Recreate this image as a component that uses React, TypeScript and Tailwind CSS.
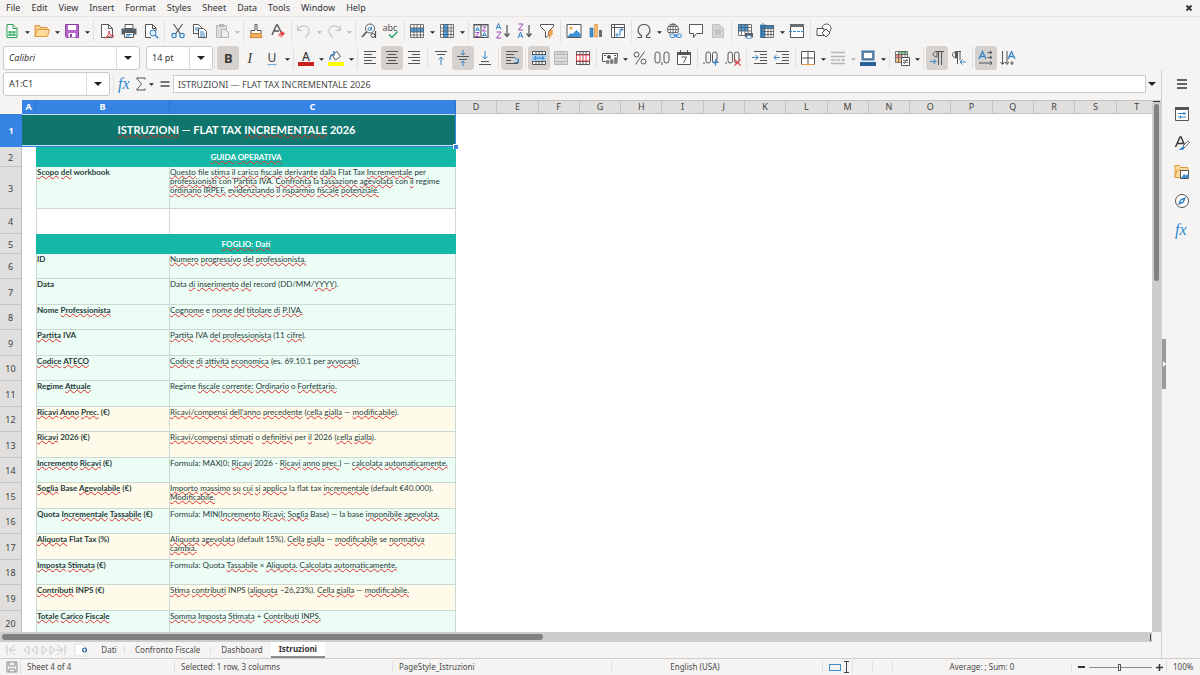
import type { ReactNode } from 'react'
import clsx from 'clsx'

const G = '#555555'
const B = '#3584c8'

// 16x16 drawings, keyed by command name
const icons: Record<string, ReactNode> = {
  new: (
    <>
      <path d="M3 1.5h6l4 4v9H3z" fill="#fff" stroke="#2f9e57" />
      <path d="M9 1.5v4h4" fill="#d6f0de" stroke="#2f9e57" />
      <path d="M4.5 8h7v5h-7z" fill="#43b36b" />
      <path d="M4.5 10.5h7M8 8v5" stroke="#d6f0de" strokeWidth=".7" />
    </>
  ),
  open: (
    <>
      <path d="M1 13.5v-11h4.5l1 2H13v2" fill="#f7d08a" stroke="#d9923b" />
      <path d="M1 13.5 3.5 6.5h12l-2 7z" fill="#fbdc9c" stroke="#e09a3e" />
    </>
  ),
  save: (
    <>
      <path d="M1.500 1.500h13v13h-12l-1-1z" fill="#b667c7" stroke="#8e3fa3" />
      <path d="M4 2h8v5H4z" fill="#fff" />
      <path d="M4.500 10h7v4.500h-7z" fill="#fff" />
      <path d="M6 11h2v3H6z" fill="#8e3fa3" />
    </>
  ),
  pdf: (
    <>
      <path d="M2.500 1.500h7l4 4v9h-11z" fill="#fff" stroke={G} />
      <path d="M9.500 1.500v4h4" fill="none" stroke={G} />
      <path d="M6 15c3-2 4-4 4-7 0 3 2 5 5 5-3-.5-6 .5-9 2" fill="none" stroke="#d8444c" />
    </>
  ),
  print: (
    <>
      <path d="M4 1.500h8v4H4z" fill="#fff" stroke={G} />
      <path d="M.5 5.500h15v6H.5z" fill="#58606a" />
      <path d="M3.500 9.500h9v5h-9z" fill="#fff" stroke={G} />
      <path d="M5 11.500h6M5 13h4" stroke={B} />
    </>
  ),
  preview: (
    <>
      <path d="M13 8V5L9.500 1.500h-7v13H8" fill="#fff" stroke={G} />
      <path d="M9.500 1.500v4H13" fill="none" stroke={G} />
      <circle cx="10" cy="10" r="3" fill="#d9ecf9" stroke={B} />
      <path d="m12.200 12.200 3 3" stroke={B} strokeWidth="1.500" />
    </>
  ),
  cut: (
    <>
      <path d="m3.500 1 7 10M12.500 1l-7 10" stroke={G} strokeWidth="1.200" />
      <circle cx="4" cy="12.500" r="2.200" fill="none" stroke={B} strokeWidth="1.200" />
      <circle cx="12" cy="12.500" r="2.200" fill="none" stroke={B} strokeWidth="1.200" />
    </>
  ),
  copy: (
    <>
      <path d="M1.500 1.500h5l3 3v6h-8z" fill="#fff" stroke={G} />
      <path d="M3 5h4M3 7h4" stroke={B} />
      <path d="M6.500 5.500h5l3 3v6h-8z" fill="#fff" stroke={G} />
      <path d="M8 9h4M8 11h5M8 13h5" stroke={B} />
    </>
  ),
  paste: (
    <>
      <path d="M2.500 2.500h10v12h-10z" fill="#dcdcdc" stroke="#b8b8b8" />
      <path d="M5 1h5v3H5z" fill="#b8b8b8" />
      <path d="M7.500 6.500h4l3 3v5h-7z" fill="#eee" stroke="#b0b0b0" />
    </>
  ),
  brush: (
    <>
      <path d="M7 1.500h2v6h4v3H3v-3h4z" fill="#fff" stroke={G} />
      <path d="M3 10.500h10l1 4H2z" fill="#f6b26b" stroke="#d9832b" />
    </>
  ),
  clear: (
    <>
      <path d="m2 12 4.500-10h1L11 9M4 8h5" fill="none" stroke={G} strokeWidth="1.400" />
      <path d="m8 12 4-4 3 2.500-4 4z" fill="#e0474c" />
      <path d="m8 12 1.500-1.500 3 2.500-1.500 1.500z" fill="#f3a0a3" />
    </>
  ),
  undo: <path d="M1.500 2.500v5h5M2 7c3-6 11-5 11 1 0 2-1 4-4 6.500" fill="none" stroke="#c4c4c4" strokeWidth="1.200" />,
  redo: <path d="M14.500 2.500v5h-5M14 7C11 1 3 2 3 8c0 2 1 4 4 6.500" fill="none" stroke="#c4c4c4" strokeWidth="1.200" />,
  find: (
    <>
      <circle cx="9" cy="5.500" r="4.500" fill="#fff" stroke={G} />
      <path d="M5.500 9 1 14" stroke={G} strokeWidth="1.600" />
      <circle cx="8.500" cy="6" r="1.500" fill="none" stroke={B} />
      <path d="M10.500 3.500v4" stroke={B} />
      <circle cx="12" cy="12.500" r="2" fill="none" stroke={G} />
      <path d="M14.500 8v7" stroke={G} strokeWidth="1.200" />
    </>
  ),
  spell: (
    <>
      <text x="-.5" y="7.500" fontSize="9" fill={G} fontFamily="Noto Sans">abc</text>
      <path d="m6 11.500 3 3 5.500-6" fill="none" stroke="#2fa866" strokeWidth="1.500" />
    </>
  ),
  row: (
    <>
      <path d="M1.500 1.500h13v13h-13z" fill="#fff" />
      <path d="M1 5h14v4H1z" fill="#4aa0e0" />
      <path d="M1.500 1.500h13v13h-13zM1.500 5h13M1.500 9h13M1.500 12h13M5 1.500V15M8 1.500V15M11.500 1.500V15" fill="none" stroke={G} strokeWidth=".8" />
    </>
  ),
  col: (
    <>
      <path d="M1.500 1.500h13v13h-13z" fill="#fff" />
      <path d="M4.500 1H9v14H4.500z" fill="#4aa0e0" />
      <path d="M1.500 1.500h13v13h-13zM1.500 5h13M1.500 8h13M1.500 11.500h13M4.500 1.500V15M9 1.500V15M12 1.500V15" fill="none" stroke={G} strokeWidth=".8" />
    </>
  ),
  sort: (
    <>
      <path d="M1 1.500h14v13H1zM1 2h14M8 2v12" fill="#fff" stroke={G} strokeWidth="1.200" />
      <path d="m2.500 8 2-4 2 4M3 7h3" fill="none" stroke={B} />
      <path d="M2.500 9.500h3.500l-3.500 4h4" fill="none" stroke="#a347ba" />
      <path d="M9.500 4H13L9.500 8h4" fill="none" stroke="#a347ba" />
      <path d="m9.500 13.500 2-4 2 4M10 12.500h3" fill="none" stroke={B} />
    </>
  ),
  asc: (
    <>
      <path d="m1 6.500 2.500-6 2.500 6M2 4.500h3" fill="none" stroke={B} />
      <path d="M1.500 9H6l-4.500 6H6" fill="none" stroke="#a347ba" />
      <path d="M12 2v11M9.500 10.500 12 13.500l2.500-3" fill="none" stroke={G} strokeWidth="1.200" />
    </>
  ),
  desc: (
    <>
      <path d="M1.500 1H6L1.500 7H6" fill="none" stroke="#a347ba" />
      <path d="m1 15 2.500-6L6 15M2 13h3" fill="none" stroke={B} />
      <path d="M12 2v11M9.500 10.500 12 13.500l2.500-3" fill="none" stroke={G} strokeWidth="1.200" />
    </>
  ),
  filter: (
    <>
      <path d="M1.500 1.500h13v2l-5 5v4l-3 2v-6l-5-5z" fill="#fff" stroke={G} />
      <path d="m11 7-2 4h2l-1 4.500 4-5.500h-2l2-3z" fill="#f3a64d" stroke="#d9832b" strokeWidth=".5" />
    </>
  ),
  image: (
    <>
      <path d="M1 1.500h14v13H1z" fill="#fff" stroke={G} />
      <circle cx="5" cy="5" r="1.600" fill="#f3a64d" />
      <path d="m1.500 14 3-4 2 1 4-4 4 4v3z" fill="#3d92d6" />
    </>
  ),
  chart: (
    <>
      <path d="M2 5h3v9H2z" fill="#3d92d6" stroke="#2468a0" strokeWidth=".6" />
      <path d="M6.500 1.500h3V14h-3z" fill="#f8bd72" stroke="#d9832b" strokeWidth=".6" />
      <path d="M11 7h3v7h-3z" fill="#6b6b6b" />
    </>
  ),
  pivot: (
    <>
      <path d="M1.500 1.500h13v13h-13zM1.500 4.500h13M4.500 1.500v13" fill="#fff" stroke={G} />
      <path d="M6 10.500c0 2 2 2 4 1.500V6.500h3M8 10l-2 2.500 2 2M11 4.500l2 2-2 2" fill="none" stroke={B} />
    </>
  ),
  omega: <path d="M1.500 14.500h4v-2C0 9.500 1.500 1.500 8 1.500s8 8 2.500 11v2h4" fill="none" stroke={G} strokeWidth="1.200" />,
  link: (
    <>
      <circle cx="7" cy="6.500" r="5.500" fill="#fff" stroke={G} />
      <path d="M1.500 6.500h11M2.500 3.500h9M2.500 9.500h9M7 1v11" stroke={G} strokeWidth=".8" />
      <ellipse cx="7" cy="6.500" rx="2.700" ry="5.500" fill="none" stroke={G} strokeWidth=".8" />
      <path d="M4 10h12v5H4z" fill="#f5f4f3" />
      <rect x="4" y="11" width="5.500" height="3.500" rx="1.700" fill="none" stroke={B} />
      <rect x="10" y="11" width="5.500" height="3.500" rx="1.700" fill="none" stroke={B} />
      <path d="M7.500 12.800h5" stroke={B} />
    </>
  ),
  comment: <path d="M1.500 1.500h13v9h-6l-3 4v-4h-4z" fill="#fff" stroke={G} />,
  header: (
    <>
      <path d="M2.500 1.500h7l4 4v9h-11z" fill="#d5d5d5" stroke="#c0c0c0" />
      <path d="M5 7h6M5 9h6M5 11h6" stroke="#b5b5b5" />
    </>
  ),
  parea: (
    <>
      <path d="M1.500 1.500h13v12h-13z" fill="#fff" />
      <path d="M1 1h10v7H1z" fill="#4aa0e0" />
      <path d="M1.500 1.500h13v11h-13zM1.500 4.500h13M1.500 8h13M4.500 1.500v11M8 1.500v11M11 1.500v11" fill="none" stroke={G} strokeWidth=".8" />
      <path d="M8 10h8v4.500H8z" fill="#55606c" />
      <path d="M10 12.500h4v3h-4z" fill="#fff" stroke={B} strokeWidth=".7" />
    </>
  ),
  freeze: (
    <>
      <path d="M2.500 2.500h12v12h-12z" fill="#fff" />
      <path d="M1 2h14v3.500H6V15H1z" fill="#3d92d6" />
      <path d="M2.500 2.500h12v12h-12zM2.500 5.500h12M2.500 8.500h12M2.500 11.500h12M6 2.500v12M9 2.500v12M12 2.500v12" fill="none" stroke={G} strokeWidth=".8" />
      <path d="M4 0v5M1.500 1.500l5 2.500M6.500 1.500l-5 2.500" stroke="#2468a0" strokeWidth=".8" />
    </>
  ),
  split: (
    <>
      <path d="M1.500 1.500h13v13h-13z" fill="#fff" stroke={G} />
      <path d="M1 1h14v3H1z" fill="#6b6b6b" />
      <path d="M0 8.500h16" stroke={B} strokeDasharray="3 1" />
    </>
  ),
  shapes: (
    <>
      <circle cx="10.500" cy="5.500" r="4.500" fill="#fff" stroke={G} />
      <path d="M1 5.500h7v7H1z" fill="#fff" stroke={G} />
      <path d="m10 6 4 4-4 4-4-4z" fill="#fff" stroke={G} />
    </>
  ),
  bold: <text x="4" y="13" fontSize="13" fontWeight="700" fill="#3a3a3a" fontFamily="Noto Sans">B</text>,
  italic: <text x="5.500" y="13" fontSize="14" fontStyle="italic" fill="#3a3a3a" fontFamily="Liberation Serif">I</text>,
  underline: (
    <>
      <text x="3.500" y="12" fontSize="12" fill="#3a3a3a" fontFamily="Noto Sans">U</text>
      <path d="M3.500 14.500h9" stroke="#6da7dc" />
    </>
  ),
  fontcolor: (
    <>
      <text x="4" y="10.500" fontSize="12" fontWeight="500" fill="#3a3a3a" fontFamily="Noto Sans">A</text>
      <path d="M0 12h16v4H0z" fill="#c9211e" />
    </>
  ),
  highlight: (
    <>
      <path d="m4 5 5-3.500 3.500 5-5 3.500z" fill="#fff" stroke={G} />
      <path d="M4 5c-2 0-2 3-2 5M6 1v5" fill="none" stroke={B} strokeWidth="1.400" />
      <path d="M0 12h16v4H0z" fill="#ffff00" />
    </>
  ),
  left: <path d="M2 1.500h12M2 4.500h8M2 7.500h12M2 10.500h8M2 13.500h12" stroke={G} />,
  center: <path d="M2 1.500h12M4 4.500h8M2 7.500h12M4 10.500h8M2 13.500h12" stroke={G} />,
  right: <path d="M2 1.500h12M6 4.500h8M2 7.500h12M6 10.500h8M2 13.500h12" stroke={G} />,
  top: (
    <>
      <path d="M2 1.500h12M4 4.500h8" stroke={G} />
      <path d="M8 15V7M5.500 9.500 8 7l2.500 2.500" fill="none" stroke={B} />
    </>
  ),
  middle: (
    <>
      <path d="M2 6.500h12M4 9.500h8" stroke={G} />
      <path d="M8 0v5M6 3l2 2 2-2M8 16v-5M6 13l2-2 2 2" fill="none" stroke={B} />
    </>
  ),
  bottom: (
    <>
      <path d="M2 14.500h12M4 11.500h8" stroke={G} />
      <path d="M8 1v8M5.500 6.500 8 9l2.500-2.500" fill="none" stroke={B} />
    </>
  ),
  wrap: (
    <>
      <path d="M2 1.500h12M2 4.500h8M2 7.500h7M2 10.500h5M2 13.500h12" stroke={G} />
      <path d="M9 7.500c3 0 4 1 5 4M14.500 8.500v4h-4" fill="none" stroke={B} />
    </>
  ),
  merge: (
    <>
      <path d="M1.500 1.500h13v13h-13zM1.500 4.500h13M1.500 11.500h13M5 1.500v3M8 1.500v3M11 1.500v3M5 11.500v3M8 11.500v3M11 11.500v3" fill="#fff" stroke={G} />
      <path d="M1 5h14v6H1z" fill="#9fcdf1" />
      <path d="M3 8h10M5 6 3 8l2 2M11 6l2 2-2 2" fill="none" stroke={B} />
    </>
  ),
  merge2: <path d="M1.500 1.500h13v13h-13zM1.500 4.500h13M1.500 11.500h13M5 1.500v3M8 1.500v3M11 1.500v3M5 11.500v3M8 11.500v3M11 11.500v3M1.500 8h13" fill="#dedede" stroke="#b5b5b5" />,
  unmerge: (
    <>
      <path d="M1.500 1.500h13v13h-13zM1.500 4.500h13M1.500 11.500h13M5 1.500v13M8 1.500v13M11 1.500v13" fill="#fff" stroke={G} />
      <path d="M1.500 5h13v6h-13zM5 5v6M8 5v6M11 5v6" fill="#fff" stroke="#d8444c" />
    </>
  ),
  currency: (
    <>
      <path d="M.5 3.500h15v8H.5z" fill="#fff" stroke={G} />
      <circle cx="7" cy="7" r="2" fill={G} />
      <path d="M2 5.500h2M12 5.500h2" stroke={G} />
      <path d="M4 10h3.500v4H4zM8 9h3.500v5H8zM12 7h3.500v7H12z" fill="#7a7a7a" stroke="#f5f4f3" strokeWidth=".4" />
    </>
  ),
  percent: (
    <>
      <circle cx="4.500" cy="4.500" r="2.500" fill="none" stroke={G} />
      <circle cx="11.500" cy="11.500" r="2.500" fill="none" stroke={G} />
      <path d="M12.500 1.500 3.500 14.500" stroke={G} />
    </>
  ),
  number: (
    <>
      <rect x="1" y="2" width="5" height="11" rx="2.500" fill="none" stroke={G} />
      <rect x="10" y="2" width="5" height="11" rx="2.500" fill="none" stroke={G} />
      <path d="M8 12v3" stroke={G} />
    </>
  ),
  date: (
    <>
      <path d="M1.500 2.500h13v12h-13z" fill="#fff" stroke={G} />
      <path d="M1 2h14v3H1zM4 0h1v2H4zM11 0h1v2h-1z" fill={G} />
      <path d="M5.500 7h5L7.500 13" fill="none" stroke={G} />
    </>
  ),
  adddec: (
    <>
      <path d="M1 12v2" stroke={G} />
      <rect x="3" y="2" width="4.500" height="11" rx="2.200" fill="none" stroke={G} />
      <rect x="9.500" y="2" width="4.500" height="11" rx="2.200" fill="none" stroke={G} />
      <path d="M12.500 9v6.500M9.300 12.300h6.500" stroke={B} strokeWidth="1.200" />
    </>
  ),
  deldec: (
    <>
      <path d="M1 12v2" stroke={G} />
      <rect x="3" y="2" width="4.500" height="11" rx="2.200" fill="none" stroke={G} />
      <rect x="9.500" y="2" width="4.500" height="11" rx="2.200" fill="none" stroke={G} />
      <path d="m9.500 9.500 6 6M15.500 9.500l-6 6" stroke="#e0474c" strokeWidth="1.200" />
    </>
  ),
  indent: (
    <>
      <path d="M2 1.500h13M8 4.500h7M8 7.500h7M8 10.500h7M2 13.500h13" stroke={G} />
      <path d="M0 7.500h6M3.500 5 6 7.500 3.500 10" fill="none" stroke={B} />
    </>
  ),
  outdent: (
    <>
      <path d="M2 1.500h13M8 4.500h7M8 7.500h7M8 10.500h7M2 13.500h13" stroke={G} />
      <path d="M0 7.500h6M2.500 5 0 7.500 2.500 10" fill="none" stroke={B} />
    </>
  ),
  borders: (
    <>
      <path d="M1.500 1.500h13v13h-13zM8 1.500v13M1.500 8h13" fill="#fff" stroke={G} />
      <path d="M1.500 14.500h13" stroke="#e39a4a" />
    </>
  ),
  linestyle: <path d="M1 2.500h14M1 6.500h14M1 10h4M6 10h4M11 10h4M1 13.500h14" stroke="#b5b5b5" strokeWidth="1.500" />,
  bordercolor: (
    <>
      <path d="M2.500 1.500h11v8h-11z" fill="#fff" stroke="#3d78b4" strokeWidth="2" />
      <path d="M3.500 2.500h9v6h-9z" fill="#fff" stroke={G} strokeWidth=".6" />
      <path d="M0 12h16v4H0z" fill="#2a6099" />
    </>
  ),
  cond: (
    <>
      <path d="M1.500 1.500h12v11h-12z" fill="#fff" />
      <path d="M5 1h8v3H5z" fill="#84cf96" />
      <path d="M1.500 5h7v3h-7z" fill="#ee8a8a" />
      <path d="M1.500 9h6v3h-6z" fill="#f6c27c" />
      <path d="M1.500 1.500h12v11h-12zM1.500 4.500h12M1.500 8h12M4.500 1.500v11M8 1.500v11M11 1.500v11" fill="none" stroke={G} strokeWidth=".8" />
      <path d="M7.500 7.500h8v8h-8z" fill="#fff" stroke={G} />
      <path d="M9 10.500h5M9 12.500h5M13 9l-3 5" stroke={G} strokeWidth=".8" />
    </>
  ),
  ltr: (
    <>
      <path d="M8 7C3 7 3 1.500 8 1.500h7M9.500 1.500V15M12.500 1.500V15M8 2v5" fill="none" stroke={G} />
      <path d="M1 11.500h6M4.500 9 7 11.500 4.500 14" fill="none" stroke={B} />
    </>
  ),
  rtl: (
    <>
      <path d="M6 8C0 8 0 1.500 6 1.500h4M6.500 1.500V14M9 1.500V10M5 2v5" fill="none" stroke={G} />
      <path d="M4 2h2v5.500H4z" fill={G} />
      <path d="M9 12h6M11.500 9.500 9 12l2.500 2.500" fill="none" stroke={B} />
    </>
  ),
  horizontal: (
    <>
      <path d="m1 9 3.500-7.500L8 9M2.300 6.500h4.500" fill="none" stroke={B} strokeWidth="1.300" />
      <path d="M9.500 2.500H14M12 1l2 1.500L12 4M9.500 7.500H14M12 6l2 1.500L12 9M1 13h13M12 11l2 2-2 2" fill="none" stroke={G} />
    </>
  ),
  vertical: (
    <>
      <path d="m8 9 3.500-7.500L15 9M9.300 6.500h4.500" fill="none" stroke={B} strokeWidth="1.300" />
      <path d="M2.500 1v13M.5 12l2 2.500 2-2.500M7 1v13M5 12l2 2.500L9 12M12 11v3.500M10.500 12.500l1.500 2 1.500-2" fill="none" stroke={G} />
    </>
  ),
  fx: <text x="1" y="12.500" fontSize="16" fontStyle="italic" fill="#2f86d0" fontFamily="Liberation Serif">fx</text>,
  sigma: <path d="M12 3.500V2H3.500l5 6-5 6H12v-1.500" fill="none" stroke={G} />,
  equals: <path d="M3.500 6h9M3.500 10h9" stroke="#4a4a4a" strokeWidth="1.600" />,
  menu: <path d="M3 4h10M3 8h10M3 12h10" stroke="#333" strokeWidth="1.400" />,
  properties: (
    <>
      <path d="M1.500 1.500h13v13h-13z" fill="#fff" stroke={G} />
      <path d="M1 1h14v3H1z" fill={G} />
      <path d="M4 7.500h8M4 11h8M10 6v3M6.500 9.500v3" stroke={B} />
    </>
  ),
  styles: (
    <>
      <path d="m1.500 12 4.500-10h1l4 9M3.500 8.500H9" fill="none" stroke="#3a3a3a" strokeWidth="1.500" />
      <path d="m9 11 5-5 1.500 1.500-5 5z" fill="#fff" stroke={G} strokeWidth=".8" />
      <path d="M4.500 14.500c3 1 6.500.5 6-3-2-1.500-3 2-6 3" fill={B} />
    </>
  ),
  gallery: (
    <>
      <path d="M1 13.500v-12h4.500l1 2H14v3" fill="#fbdc9c" stroke="#e09a3e" />
      <path d="M1 13.500 3 6h4v7.500z" fill="#fbdc9c" stroke="#e09a3e" />
      <path d="M6.500 6.500h8v8h-8z" fill="#fff" stroke={G} />
      <path d="m7 14 3-4 2 1.500 2.500-2V14z" fill="#3d92d6" />
    </>
  ),
  navigator: (
    <>
      <circle cx="8" cy="8" r="6.500" fill="#fff" stroke={G} />
      <path d="m11.500 4.500-2 5-5 2 2-5z" fill="#3d92d6" stroke="#2468a0" strokeWidth=".6" />
      <circle cx="8" cy="8" r="1" fill="#fff" />
    </>
  ),
}

type Tool = { id: string; label: string; arrow?: boolean; on?: boolean; dim?: boolean }

// '|' is a separator, ':' a slightly narrower one
const standardBar: (Tool | '|' | ':')[] = [
  { id: 'new', label: 'New', arrow: true },
  { id: 'open', label: 'Open', arrow: true },
  { id: 'save', label: 'Save', arrow: true },
  '|',
  { id: 'pdf', label: 'Export as PDF' },
  { id: 'print', label: 'Print' },
  { id: 'preview', label: 'Print Preview' },
  '|',
  { id: 'cut', label: 'Cut' },
  { id: 'copy', label: 'Copy' },
  { id: 'paste', label: 'Paste', arrow: true, dim: true },
  ':',
  { id: 'brush', label: 'Clone Formatting' },
  { id: 'clear', label: 'Clear Formatting' },
  ':',
  { id: 'undo', label: 'Undo', arrow: true, dim: true },
  { id: 'redo', label: 'Redo', arrow: true, dim: true },
  '|',
  { id: 'find', label: 'Find and Replace' },
  { id: 'spell', label: 'Spelling' },
  ':',
  { id: 'row', label: 'Row', arrow: true },
  { id: 'col', label: 'Column', arrow: true },
  ':',
  { id: 'sort', label: 'Sort' },
  { id: 'asc', label: 'Sort Ascending' },
  { id: 'desc', label: 'Sort Descending' },
  { id: 'filter', label: 'AutoFilter' },
  '|',
  { id: 'image', label: 'Insert Image' },
  { id: 'chart', label: 'Insert Chart' },
  { id: 'pivot', label: 'Pivot Table' },
  ':',
  { id: 'omega', label: 'Special Character', arrow: true },
  { id: 'link', label: 'Hyperlink' },
  { id: 'comment', label: 'Comment' },
  { id: 'header', label: 'Headers and Footers', dim: true },
  '|',
  { id: 'parea', label: 'Define Print Area' },
  { id: 'freeze', label: 'Freeze Rows and Columns', arrow: true },
  { id: 'split', label: 'Split Window' },
  '|',
  { id: 'shapes', label: 'Draw Functions' },
]

const formatBar: (Tool | '|' | ':')[] = [
  { id: 'bold', label: 'Bold', on: true },
  { id: 'italic', label: 'Italic' },
  { id: 'underline', label: 'Underline', arrow: true },
  ':',
  { id: 'fontcolor', label: 'Font Color', arrow: true },
  { id: 'highlight', label: 'Highlighting', arrow: true },
  ':',
  { id: 'left', label: 'Align Left' },
  { id: 'center', label: 'Center Horizontally', on: true },
  { id: 'right', label: 'Align Right' },
  '|',
  { id: 'top', label: 'Align Top' },
  { id: 'middle', label: 'Center Vertically', on: true },
  { id: 'bottom', label: 'Align Bottom' },
  '|',
  { id: 'wrap', label: 'Wrap Text', on: true },
  '|',
  { id: 'merge', label: 'Merge and Center', on: true },
  { id: 'merge2', label: 'Merge Cells', dim: true },
  { id: 'unmerge', label: 'Unmerge Cells' },
  '|',
  { id: 'currency', label: 'Currency', arrow: true },
  { id: 'percent', label: 'Percent' },
  { id: 'number', label: 'Number' },
  { id: 'date', label: 'Date' },
  '|',
  { id: 'adddec', label: 'Add Decimal Place' },
  { id: 'deldec', label: 'Delete Decimal Place' },
  '|',
  { id: 'indent', label: 'Increase Indent' },
  { id: 'outdent', label: 'Decrease Indent' },
  ':',
  { id: 'borders', label: 'Borders', arrow: true },
  { id: 'linestyle', label: 'Border Style', arrow: true, dim: true },
  { id: 'bordercolor', label: 'Border Color', arrow: true },
  ':',
  { id: 'cond', label: 'Conditional', arrow: true },
  '|',
  { id: 'ltr', label: 'Left-To-Right', on: true },
  { id: 'rtl', label: 'Right-To-Left' },
  '|',
  { id: 'horizontal', label: 'Text direction horizontal', on: true },
  { id: 'vertical', label: 'Text direction vertical' },
]

const menus = ['File', 'Edit', 'View', 'Insert', 'Format', 'Styles', 'Sheet', 'Data', 'Tools', 'Window', 'Help']
const letters = 'DEFGHIJKLMNOPQRST'.split('')

// words between asterisks get the spell checker's wavy line
const rows: [string, string, boolean?][] = [
  ['ID', '*Numero* *progressivo* *del* *professionista.*'],
  ['Data', 'Data *di* *inserimento* *del* record (DD/MM/*YYYY*).'],
  ['Nome *Professionista*', '*Cognome* e *nome* *del* *titolare* *di* *P.IVA.*'],
  ['*Partita* IVA', '*Partita* IVA *del* *professionista* (11 *cifre*).'],
  ['*Codice* *ATECO*', '*Codice* *di* *attività* *economica* (es. 69.10.1 per *avvocati*).'],
  ['Regime *Attuale*', 'Regime *fiscale* *corrente:* *Ordinario* o *Forfettario.*'],
  ['*Ricavi* *Anno* *Prec.* (€)', '*Ricavi/compensi* *dell’anno* *precedente* (*cella* *gialla* — *modificabile*).', true],
  ['*Ricavi* 2026 (€)', '*Ricavi/compensi* *stimati* o *definitivi* per *il* 2026 (*cella* *gialla*).', true],
  ['*Incremento* *Ricavi* (€)', 'Formula: MAX(0; *Ricavi* 2026 - *Ricavi* *anno* *prec.*) — *calcolata* *automaticamente.*'],
  ['*Soglia* Base *Agevolabile* (€)', '*Importo* *massimo* *su* *cui* *si* *applica* la flat tax *incrementale* (default €40.000). *Modificabile.*', true],
  ['Quota *Incrementale* *Tassabile* (€)', 'Formula: MIN(*Incremento* *Ricavi;* *Soglia* Base) — la base *imponibile* *agevolata.*'],
  ['*Aliquota* Flat Tax (%)', '*Aliquota* *agevolata* (default 15%). *Cella* *gialla* — *modificabile* se *normativa* *cambia.*', true],
  ['*Imposta* *Stimata* (€)', 'Formula: Quota *Tassabile* × *Aliquota.* *Calcolata* *automaticamente.*'],
  ['*Contributi* INPS (€)', '*Stima* *contributi* INPS (*aliquota* ~26,23%). *Cella* *gialla* — *modificabile.*', true],
  ['*Totale* *Carico* *Fiscale*', '*Somma* *Imposta* *Stimata* + *Contributi* *INPS.*'],
]

function Spell({ text }: { text: string }) {
  return (
    <>
      {text.split('*').map((part, i) =>
        i % 2 ? (
          <span key={i} className="underline decoration-[#d9302c] decoration-wavy decoration-1 underline-offset-0 [text-decoration-skip-ink:none]">
            {part}
          </span>
        ) : (
          part
        )
      )}
    </>
  )
}

function Icon({ id }: { id: string }) {
  return (
    <svg viewBox="0 0 16 16" className="size-4 shrink-0 overflow-visible" aria-hidden="true">
      {icons[id]}
    </svg>
  )
}

function Caret({ dim, big }: { dim?: boolean; big?: boolean }) {
  return (
    <svg viewBox="0 0 8 4" className={clsx('shrink-0', big ? 'h-1 w-2' : 'h-[3px] w-[5px]')} aria-hidden="true">
      <path d="M0 0h8L4 4z" fill={dim ? '#b5b5b5' : '#222'} />
    </svg>
  )
}

function Tools({ items }: { items: (Tool | '|' | ':')[] }) {
  return (
    <div className="flex items-center">
      {items.map((item, i) =>
        typeof item === 'string' ? (
          <span key={i} className={clsx('flex h-[22px] justify-center', item === '|' ? 'w-[5px]' : 'w-1')}>
            <span className="w-px bg-[#e2e1df]" />
          </span>
        ) : (
          <div key={i} className="flex items-center">
            <button
              aria-label={item.label}
              disabled={item.dim}
              className={clsx('flex h-6 w-[22px] items-center justify-center rounded-[3px]', item.on && 'bg-[#d5d1ce]')}
            >
              <Icon id={item.id} />
            </button>
            {item.arrow && (
              <button aria-label={item.label + ' options'} className="flex h-6 w-2 items-center justify-center pt-0.5">
                <Caret dim={item.dim} />
              </button>
            )}
          </div>
        )
      )}
    </div>
  )
}

function FontBars() {
  return (
    <div className="flex h-[26px] shrink-0 items-center pl-[3px]">
      <div className="mr-1.5 flex h-6 w-[137px] rounded-[3px] border border-[#cdc9c5] bg-white">
        <select aria-label="Font Name" className="min-w-0 flex-1 appearance-none pl-[5px] italic">
          <option>Calibri</option>
        </select>
        <span className="flex w-[23px] items-center justify-center border-l border-[#dedbd8]"><Caret big /></span>
      </div>
      <div className="mr-px flex h-6 w-[67px] rounded-[3px] border border-[#cdc9c5] bg-white">
        <select aria-label="Font Size" className="min-w-0 flex-1 appearance-none pl-[5px]">
          <option>14 pt</option>
        </select>
        <span className="flex w-[23px] items-center justify-center border-l border-[#dedbd8]"><Caret big /></span>
      </div>
      <span className="mr-0.5 h-[22px] w-px bg-[#e2e1df]" />
      <Tools items={formatBar} />
    </div>
  )
}

function FormulaBar() {
  return (
    <div className="mt-px mb-[3px] flex h-[26px] shrink-0 items-center pl-[3px]">
      <div className="flex h-6 w-[107px] rounded-[3px] border border-[#cdc9c5] bg-white">
        <input aria-label="Name Box" defaultValue="A1:C1" className="min-w-0 flex-1 pl-[5px] outline-none" />
        <button aria-label="Name Box list" className="flex w-[23px] items-center justify-center border-l border-[#dedbd8]"><Caret big /></button>
      </div>
      <span className="mx-[3px] h-5 w-px bg-[#e2e1df]" />
      <button aria-label="Function Wizard"><Icon id="fx" /></button>
      <button aria-label="Select Function" className="flex items-center"><Icon id="sigma" /><Caret /></button>
      <button aria-label="Formula" className="ml-[3px]"><Icon id="equals" /></button>
      <input
        aria-label="Input line"
        defaultValue="ISTRUZIONI — FLAT TAX INCREMENTALE 2026"
        className="h-[18px] min-w-0 flex-1 border border-[#d0cdca] bg-white pl-1 text-[#4a4a4a] outline-none"
      />
      <button aria-label="Expand Formula Bar" className="flex w-[15px] pl-0.5"><Caret big /></button>
    </div>
  )
}

function RowHead({ n }: { n: number }) {
  return (
    <th scope="row" className="border-r border-b border-[#c3c2c0] bg-[#e0dfdd] pt-0.5 align-middle font-[Noto_Sans,sans-serif] text-[9px] font-normal text-[#3f3f3f]">
      {n}
    </th>
  )
}

function Sheet() {
  return (
    <table className="w-[calc(100%+6px)] table-fixed border-separate border-spacing-0">
      <colgroup>
        <col className="w-[22px]" />
        <col className="w-[14px]" />
        <col className="w-[134px]" />
        <col className="w-[286px]" />
        {letters.map(l => <col key={l} />)}
      </colgroup>
      <thead>
        <tr className="h-[14px] leading-3">
          <th className="bg-[#f5f4f3]" />
          {['A', 'B', 'C'].map(l => (
            <th key={l} scope="col" className="border-r border-[#2f74cc] bg-[#3584e4] font-bold text-white">{l}</th>
          ))}
          {letters.map(l => (
            <th key={l} scope="col" className="border-t border-r border-b border-[#c3c2c0] bg-[#e0dfdd] font-normal text-[#3f3f3f]">{l}</th>
          ))}
        </tr>
      </thead>
      <tbody className="text-[9px]">
        <tr className="h-[33px]">
          <th scope="row" className="bg-[#3584e4] font-bold text-white">1</th>
          <td colSpan={3} className="relative border-r border-b border-[#3584e4] bg-[#0f766e] pr-1 text-center font-[Lato,sans-serif] text-[11px] font-bold text-white">
            <Spell text="*ISTRUZIONI* — FLAT TAX *INCREMENTALE* 2026" />
            <span className="absolute inset-0 border-t border-b border-[#bfe0f5]" />
            <span className="absolute -right-[3px] -bottom-[3px] size-[5px] border-t border-l border-white bg-[#3584e4]" />
          </td>
        </tr>
        <tr className="h-5">
          <RowHead n={2} />
          <td />
          <td colSpan={2} className="bg-[#14b8a6] text-center font-[Lato,sans-serif] text-[8px] font-bold text-white"><Spell text="*GUIDA* *OPERATIVA*" /></td>
        </tr>
        <tr className="h-[42px] align-top font-[Lato,sans-serif] text-[8px] leading-[9px] text-[#263b3a]">
          <RowHead n={3} />
          <td />
          <td className="border-r border-b border-l border-[#cbd9d5] bg-[#ecfdf5] pt-px font-bold"><Spell text="*Scopo* *del* workbook" /></td>
          <td className="border-r border-b border-[#cbd9d5] bg-[#ecfdf5] pt-px pr-1">
            <Spell text="*Questo* file *stima* *il* *carico* *fiscale* *derivante* *dalla* Flat Tax *Incrementale* per *professionisti* con *Partita* IVA. *Confronta* la *tassazione* *agevolata* con *il* regime *ordinario* *IRPEF,* *evidenziando* *il* *risparmio* *fiscale* *potenziale.*" />
          </td>
        </tr>
        <tr className="h-[25px]">
          <RowHead n={4} />
          <td />
          <td className="border-r border-l border-[#d6d6d6]" />
          <td className="border-r border-[#d6d6d6]" />
        </tr>
        <tr className="h-5">
          <RowHead n={5} />
          <td />
          <td colSpan={2} className="bg-[#14b8a6] text-center font-[Lato,sans-serif] text-[8px] font-bold text-white"><Spell text="*FOGLIO:* *Dati*" /></td>
        </tr>
        {rows.map(([name, text, yellow], i) => (
          <tr key={i} className={i % 2 ? 'h-[26px]' : 'h-[25px]'}>
            <RowHead n={i + 6} />
            <td />
            <td className={clsx('border-r border-b border-l border-[#cbd9d5] pt-px align-top font-[Lato,sans-serif] text-[8px] leading-[9px] font-bold whitespace-nowrap text-[#263b3a]', yellow ? 'bg-[#fffbeb]' : 'bg-[#ecfdf5]')}>
              <Spell text={name} />
            </td>
            <td className={clsx('border-r border-b border-[#cbd9d5] pt-px pr-1 align-top font-[Lato,sans-serif] text-[8px] leading-[9px] text-[#263b3a]', yellow ? 'bg-[#fffbeb]' : 'bg-[#ecfdf5]')}>
              <Spell text={text} />
            </td>
          </tr>
        ))}
      </tbody>
    </table>
  )
}

function SheetTabs() {
  return (
    <div className="flex h-4 shrink-0 items-stretch text-[8px] text-[#4a4a4a]">
      <svg viewBox="0 0 60 12" className="mt-0.5 ml-1.5 h-3 w-[60px]" fill="none" stroke="#c9c9c7" aria-hidden="true">
        <path d="M1 1v10M9 1 3 6l6 5M3 6h7M23 2l-5 4 5 4V2M31 2l-5 4 5 4V2M36 2l5 4-5 4V2M44 2l5 4-5 4V2M51 1l6 5-6 5M50 6h7M59 1v10" />
      </svg>
      <button aria-label="Add Sheet" className="mr-1 ml-2 w-[14px]">
        <svg viewBox="0 0 14 14" className="size-[14px]">
          <path d="M1 1h7l4 4v8H1z" fill="#fff" stroke="#dedede" />
          <circle cx="10.500" cy="7" r="2.500" fill="#3465a4" />
          <path d="M9 7h3M10.500 5.500v3" stroke="#fff" />
        </svg>
      </button>
      <button className="w-8 pl-0.5">Dati</button>
      <button className="my-1 border-x border-[#dedcda] px-2.5 leading-[8px]">Confronto Fiscale</button>
      <button className="pr-2 pl-2.5">Dashboard</button>
      <button className="border-b-2 border-[#8b8b8b] bg-white px-2 font-bold text-[#333]">Istruzioni</button>
    </div>
  )
}

function StatusBar() {
  return (
    <footer className="grid h-[17px] shrink-0 grid-cols-[20px_154fr_218fr_219fr_211fr_30px_20px_20px_179fr_95px_34px] items-center border-t border-[#cfcdcb] text-[8px] text-[#4a4a4a]">
      <svg viewBox="0 0 12 12" className="ml-1.5 size-3" fill="none" stroke="#8b8b8b" aria-label="Document modified">
        <path d="M1 1h10v10H1zM3 1v4h6V1M3 11V8h6v3" />
      </svg>
      <span className="border-l border-[#e2e1df] pl-1.5">Sheet 4 of 4</span>
      <span className="border-l border-[#e2e1df] pl-1.5">Selected: 1 row, 3 columns</span>
      <span className="border-l border-[#e2e1df] pl-1.5">PageStyle_Istruzioni</span>
      <span className="border-l border-[#e2e1df] pr-11 text-center">English (USA)</span>
      <span className="flex items-center gap-[3px] border-l border-[#e2e1df] pl-1.5">
        <span className="h-[7px] w-3 border border-[#3d8fc8]" />
        <svg viewBox="0 0 5 12" className="h-3 w-[5px]" stroke="#444" aria-hidden="true"><path d="M0 .5h5M2.500 .5v11M0 11.500h5" /></svg>
      </span>
      <span className="h-3 border-l border-[#e2e1df]" />
      <span className="h-3 border-l border-[#e2e1df]" />
      <span className="border-l border-[#e2e1df] text-center">Average: ; Sum: 0</span>
      <span className="flex items-center gap-1 border-l border-[#e2e1df] pl-1.5">
        <button aria-label="Zoom Out" className="h-[2px] w-[7px] bg-[#333]" />
        <input
          type="range"
          aria-label="Zoom"
          defaultValue={49}
          className="h-px min-w-0 flex-1 appearance-none bg-[#8b8b8b] [&::-webkit-slider-thumb]:h-[7px] [&::-webkit-slider-thumb]:w-[3px] [&::-webkit-slider-thumb]:appearance-none [&::-webkit-slider-thumb]:border [&::-webkit-slider-thumb]:border-[#555] [&::-webkit-slider-thumb]:bg-white"
        />
        <button aria-label="Zoom In" className="mr-[3px]">
          <svg viewBox="0 0 7 7" className="size-[7px]" stroke="#333" strokeWidth="1.500"><path d="M0 3.500h7M3.500 0v7" /></svg>
        </button>
      </span>
      <span className="border-l border-[#e2e1df] pl-1.5">100%</span>
    </footer>
  )
}

export default function App() {
  return (
    <div className="flex h-screen flex-col overflow-hidden bg-[#f5f4f3] font-[Noto_Sans,sans-serif] text-[9px] text-[#333]">
      <header className="flex h-[17px] shrink-0 items-center border-b border-[#e6e4e2] pl-1.5">
        <nav className="flex flex-1 gap-[11px]">
          {menus.map(m => <button key={m}>{m}</button>)}
        </nav>
        <button aria-label="Close document" className="mr-[7px]">
          <svg viewBox="0 0 8 8" className="size-2" stroke="#333" strokeWidth="1.800"><path d="m1.500 1.500 5 5M6.500 1.500l-5 5" /></svg>
        </button>
      </header>

      <div className="flex h-7 shrink-0 items-center pl-px">
        <Tools items={standardBar} />
      </div>
      <FontBars />

      <div className="-mt-px flex min-h-0 flex-1">
        <main className="flex min-w-0 flex-1 flex-col border-r border-[#d3d1cf]">
          <FormulaBar />
          <div className="flex min-h-0 flex-1">
            <div className="min-w-0 flex-1 overflow-hidden bg-white">
              <Sheet />
            </div>
            <div className="flex w-[9px] flex-col items-center gap-0.5 bg-[#cdcdcd] pt-px">
              <div className="h-px w-[7px] shrink-0 bg-[#333]" />
              <div className="h-1/3 w-[5px] rounded-full bg-[#818181]" />
            </div>
          </div>
          <div className="mr-[9px] flex h-[10px] shrink-0 items-center justify-between bg-[#cdcdcd] pl-0.5">
            <div className="h-1.5 w-[47%] rounded-full bg-[#818181]" />
            <span className="mr-px h-[7px] w-px bg-[#444]" />
          </div>
          <SheetTabs />
        </main>

        <div className="flex w-1 items-center">
          <div className="flex h-[50px] w-1 items-center bg-[#9b9b9b]">
            <svg viewBox="0 0 4 6" className="h-1.5 w-1" aria-hidden="true"><path d="M1 0v6l3-3z" fill="#fff" /></svg>
          </div>
        </div>
        <aside className="flex w-[34px] flex-col items-center gap-[13px] pt-1.5">
          {['menu', 'properties', 'styles', 'gallery', 'navigator', 'fx'].map(id => (
            <button key={id} aria-label={id} className={clsx('pr-[3px]', id === 'menu' && 'mb-px')}><Icon id={id} /></button>
          ))}
        </aside>
      </div>

      <StatusBar />
    </div>
  )
}
